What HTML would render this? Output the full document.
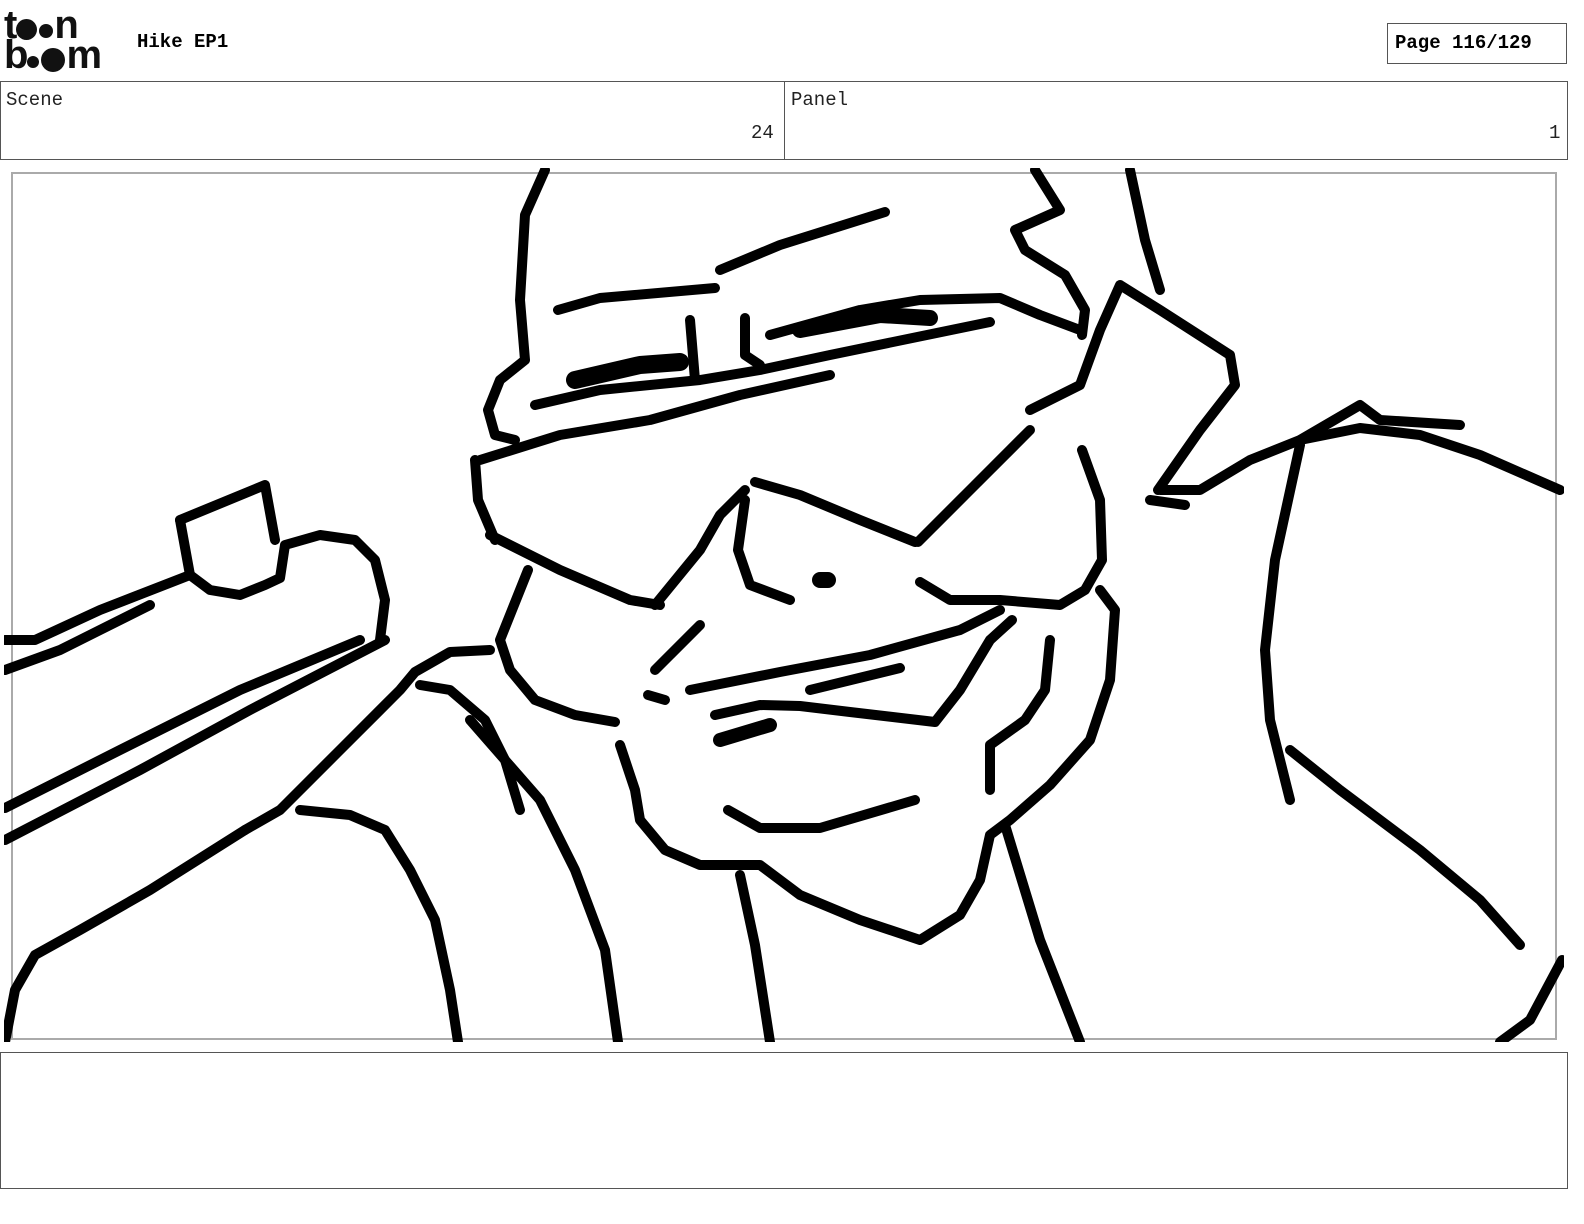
<!DOCTYPE html>
<html><head><meta charset="utf-8"><style>
body{margin:0;width:1584px;height:1224px;background:#fff;position:relative;overflow:hidden;font-family:"Liberation Mono",monospace;}
.a{position:absolute;box-sizing:border-box;}
.d{display:inline-block;border-radius:50%;background:#111;}
</style></head><body>
<!-- logo -->
<div class="a" style="left:4px;top:10px;font-family:'Liberation Sans',sans-serif;font-weight:bold;font-size:40px;line-height:30px;letter-spacing:-2px;color:#111">
<div>t<span class="d" style="width:21px;height:21px;vertical-align:-2px;margin:0 1px"></span><span class="d" style="width:14px;height:14px;margin:0 1px"></span>n</div>
<div>b<span class="d" style="width:12px;height:12px;margin:0 1px"></span><span class="d" style="width:24px;height:24px;vertical-align:-4px;margin:0 1px"></span>m</div>
</div>
<div class="a" style="left:137px;top:31px;font-weight:bold;font-size:19px;">Hike EP1</div>
<div class="a" style="left:1387px;top:23px;width:180px;height:41px;border:1px solid #555;font-weight:bold;font-size:19px;padding:8px 0 0 7px;">Page 116/129</div>
<!-- header boxes -->
<div class="a" style="left:0;top:81px;width:785px;height:79px;border:1px solid #555;"></div>
<div class="a" style="left:784px;top:81px;width:784px;height:79px;border:1px solid #555;"></div>
<div class="a" style="left:6px;top:89px;font-size:19px;color:#222">Scene</div>
<div class="a" style="left:751px;top:122px;font-size:19px;color:#222">24</div>
<div class="a" style="left:791px;top:89px;font-size:19px;color:#222">Panel</div>
<div class="a" style="left:1549px;top:122px;font-size:19px;color:#222">1</div>
<!-- frame -->
<div class="a" style="left:11px;top:172px;width:1546px;height:868px;border:2px solid #aaa;"></div>
<svg class="a" style="left:0;top:0" width="1584" height="1224" viewBox="0 0 1584 1224">
<defs><clipPath id="c"><rect x="4" y="168" width="1560" height="874"/></clipPath></defs>
<g clip-path="url(#c)" fill="none" stroke="#000" stroke-width="10" stroke-linecap="round" stroke-linejoin="round">
<path d="M545 170 L525 215 L520 300 L525 360 L500 380 L488 410 L495 435 L515 440"/>
<path d="M1035 170 L1060 210 L1015 230 L1025 250 L1065 275 L1085 310 L1082 335"/>
<path d="M1130 170 L1145 240 L1160 290"/>
<path d="M720 270 L780 245 L885 212"/>
<path d="M558 310 L600 298 L715 288"/>
<path d="M535 405 L600 390 L700 380 L760 370 L830 355 L990 322"/>
<path d="M770 335 L860 310 L920 300 L1000 298 L1040 315 L1080 330"/>
<path d="M575 380 L640 365 L680 362" stroke-width="18"/>
<path d="M800 330 L880 315 L930 318" stroke-width="16"/>
<path d="M690 320 L695 380"/><path d="M745 318 L745 355 L760 365"/>
<path d="M480 460 L560 435 L650 420 L740 395 L830 375"/>
<path d="M475 460 L478 500 L495 540"/>
<path d="M490 535 L560 570 L630 600 L660 605"/>
<path d="M655 605 L700 550 L720 515 L745 490"/>
<path d="M755 482 L800 495 L860 520 L915 542"/>
<path d="M918 542 L970 490 L1030 430"/>
<path d="M1030 410 L1080 385 L1100 330 L1120 285 L1160 310 L1230 355 L1235 385 L1200 430 L1158 490"/>
<path d="M1082 450 L1100 500 L1102 560 L1085 590 L1060 605 L1000 600 L950 600 L920 582"/>
<path d="M745 500 L738 550 L750 585 L790 600"/>
<path d="M820 580 L828 580" stroke-width="16"/>
<path d="M528 570 L512 610 L500 640 L510 670 L535 700 L575 715 L615 722"/>
<path d="M620 745 L635 790 L640 820 L665 850 L700 865 L760 865 L800 895 L860 920 L920 940 L960 915 L980 880 L990 835 L1010 820 L1050 785 L1090 740 L1110 680 L1115 610 L1100 590"/>
<path d="M690 690 L780 672 L870 655 L960 630 L1000 610"/>
<path d="M700 625 L655 670"/><path d="M648 695 L665 700"/>
<path d="M715 715 L760 705 L800 706 L850 712 L935 722 L960 690 L990 640 L1012 620"/>
<path d="M720 740 L770 725" stroke-width="14"/>
<path d="M810 690 L900 668"/>
<path d="M728 810 L760 828 L820 828 L915 800"/>
<path d="M1050 640 L1045 690 L1025 720 L990 745 L990 790"/>
<path d="M1005 825 L1040 940 L1080 1042"/>
<path d="M740 875 L755 945 L770 1042"/>
<path d="M490 650 L450 652 L415 672 L400 690 L340 750 L280 810 L245 830"/>
<path d="M420 685 L450 690 L485 720 L505 760 L520 810"/>
<path d="M470 720 L505 760 L540 800 L575 870 L605 950 L618 1042"/>
<path d="M300 810 L350 815 L385 830 L410 870 L435 920 L450 990 L458 1042"/>
<path d="M245 830 L150 890 L80 930 L35 955 L15 990 L5 1042"/>
<path d="M5 640 L35 640 L100 610 L190 575 L210 590 L240 595 L265 585 L280 578 L285 545 L320 535 L355 540 L375 560 L385 600 L380 640"/>
<path d="M180 520 L190 575"/><path d="M180 520 L265 485 L275 540"/>
<path d="M5 670 L60 650 L150 605"/>
<path d="M5 808 L120 750 L240 690 L360 640"/>
<path d="M5 840 L140 770 L250 710 L385 640"/>
<path d="M1160 490 L1200 490 L1250 460 L1300 440 L1360 405 L1380 420 L1460 425"/>
<path d="M1150 500 L1185 505"/>
<path d="M1300 440 L1360 428 L1420 435 L1480 455 L1560 490"/>
<path d="M1300 445 L1275 560 L1265 650 L1270 720 L1290 800"/>
<path d="M1290 750 L1340 790 L1420 850 L1480 900 L1520 945"/>
<path d="M1562 960 L1530 1020 L1500 1042"/>
</g>
</svg>
<!-- bottom box -->
<div class="a" style="left:0;top:1052px;width:1568px;height:137px;border:1px solid #555;"></div>
</body></html>
